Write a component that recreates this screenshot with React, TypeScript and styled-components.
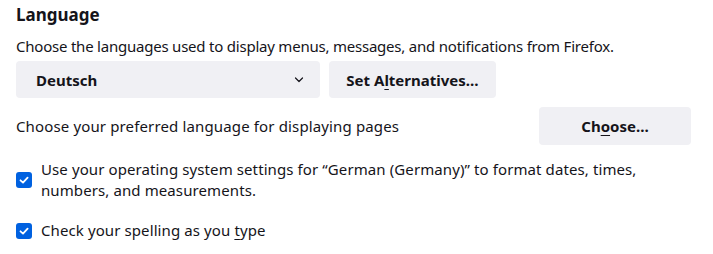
import styled, { createGlobalStyle } from "styled-components";

const GlobalStyle = createGlobalStyle`
  html, body {
    margin: 0;
    padding: 0;
    background: #ffffff;
  }
  body {
    font-family: "Noto Sans", "Open Sans", sans-serif;
    color: #15141a;
    font-size: 15px;
  }
`;

const CheckIcon = () => (
  <svg width="12" height="12" viewBox="0 0 12 12" fill="none">
    <path
      d="M2.5 6.3 L5 8.6 L9.6 3.6"
      stroke="#ffffff"
      strokeWidth="1.8"
      strokeLinecap="round"
      strokeLinejoin="round"
    />
  </svg>
);

const ChevronIcon = () => (
  <svg width="10" height="6" viewBox="0 0 10 6" fill="none">
    <path
      d="M1.5 1 L5 4.5 L8.5 1"
      stroke="#15141a"
      strokeWidth="1.2"
      strokeLinecap="round"
      strokeLinejoin="round"
    />
  </svg>
);

function App() {
  return (
    <>
      <GlobalStyle />
      <Section>
        <Heading>Language</Heading>
        <Desc>
          Choose the languages used to display menus, messages, and
          notifications from Firefox.
        </Desc>
        <ButtonRow>
          <Select>
            <span>Deutsch</span>
            <ChevronIcon />
          </Select>
          <Button>
            Set A<u>l</u>ternatives…
          </Button>
        </ButtonRow>

        <PrefRow>
          <PrefLabel>Choose your preferred language for displaying pages</PrefLabel>
          <Button wide>
            Ch<u>o</u>ose…
          </Button>
        </PrefRow>

        <CheckRow top={14}>
          <Checkbox>
            <CheckIcon />
          </Checkbox>
          <CheckLabel>
            Use your operating system settings for “German (Germany)” to format
            dates, times, numbers, and measurements.
          </CheckLabel>
        </CheckRow>

        <CheckRow top={19}>
          <Checkbox>
            <CheckIcon />
          </Checkbox>
          <CheckLabel>
            Check your spelling as you <u>t</u>ype
          </CheckLabel>
        </CheckRow>
      </Section>
    </>
  );
}

const Section = styled.div`
  display: flex;
  flex-direction: column;
  width: 675px;
  padding: 3px 22px 0 16px;
`;

const Heading = styled.h2`
  margin: 0;
  font-size: 17px;
  font-weight: 700;
  line-height: 24px;
`;

const Desc = styled.p`
  margin: 9px 0 0 0;
  font-size: 15px;
  line-height: 20px;
  letter-spacing: -0.22px;
`;

const ButtonRow = styled.div`
  display: flex;
  align-items: center;
  gap: 9px;
  margin-top: 5px;
`;

const Select = styled.div`
  display: flex;
  align-items: center;
  justify-content: space-between;
  box-sizing: border-box;
  width: 304px;
  height: 37px;
  padding: 0 16px 0 20px;
  border-radius: 4px;
  background: #f0f0f4;
  font-weight: 700;
  font-size: 15px;
`;

const Button = styled.button<{ wide?: boolean }>`
  box-sizing: border-box;
  height: 37px;
  width: ${(p) => (p.wide ? "152px" : "167px")};
  border: none;
  border-radius: 4px;
  background: #f0f0f4;
  color: #15141a;
  font-family: "Noto Sans", "Open Sans", sans-serif;
  font-size: 15px;
  font-weight: 700;
  padding: 0;
  text-align: center;

  u {
    text-underline-offset: 3px;
  }
`;

const PrefRow = styled.div`
  display: flex;
  align-items: center;
  justify-content: space-between;
  margin-top: 9px;

  ${Button} {
    height: 38px;
  }
`;

const PrefLabel = styled.span`
  font-size: 15px;
  line-height: 20px;
  letter-spacing: 0.14px;
`;

const CheckRow = styled.label<{ top: number }>`
  display: flex;
  align-items: center;
  gap: 9px;
  margin-top: ${(p) => p.top}px;
`;

const Checkbox = styled.span`
  display: flex;
  align-items: center;
  justify-content: center;
  flex: none;
  width: 16px;
  height: 16px;
  border-radius: 3px;
  background: #0061e0;
`;

const CheckLabel = styled.span`
  font-size: 15px;
  line-height: 21px;
  letter-spacing: 0.1px;

  u {
    text-underline-offset: 3px;
  }
`;

export default App;
